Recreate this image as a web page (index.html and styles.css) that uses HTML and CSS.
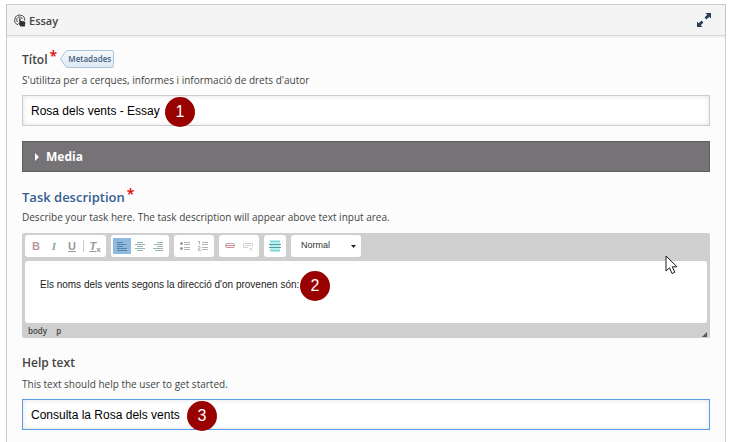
FILE: index.html
```html
<!DOCTYPE html>
<html lang="ca">
<head>
    <meta charset="UTF-8">
    <meta name="viewport" content="width=device-width, initial-scale=1.0">
    <title>Essay</title>
    <link rel="stylesheet" href="styles.css">
</head>
<body>
    <main class="panel">
        <header class="panel-header">
            <svg class="panel-icon" viewBox="0 0 12 13" fill="none" stroke="#444">
                <path d="M4 10.8A5 5 0 1 1 10.7 6.6" stroke-width="1"/>
                <path d="M3.6 8A2.9 2.9 0 1 1 8.3 5" stroke-width="1"/>
                <path d="M5 4.6q.8-.7 1.5 0v2.2l4 .8q1 .3.8 1.4l-.5 3.5H6.6L4.2 9.4q.4-.8 1.2-.2z" fill="#333" stroke="none"/>
            </svg>
            <h1>Essay</h1>
            <button type="button" class="expand" aria-label="Fullscreen">
                <svg viewBox="0 0 14 14" fill="#2c3e50">
                    <path d="M8.5 0H14v5.5l-1.8-1.8-2.7 2.7-1.9-1.9 2.7-2.7z"/>
                    <path d="M5.5 14H0V8.5l1.8 1.8 2.7-2.7 1.9 1.9-2.7 2.7z"/>
                </svg>
            </button>
        </header>

        <form class="panel-body">
            <!-- Title -->
            <div class="field">
                <div class="label-row">
                    <label for="title">Títol<span class="required">*</span></label>
                    <button type="button" class="metadata">
                        <svg viewBox="0 0 54 18">
                            <defs>
                                <linearGradient id="tagFill" x1="0" y1="0" x2="0" y2="1">
                                    <stop offset="0" stop-color="#f8fafc"/>
                                    <stop offset="1" stop-color="#dbe8f2"/>
                                </linearGradient>
                            </defs>
                            <path d="M8 .5H51.5q2 0 2 2v13q0 2-2 2H8Q6 17.5 4.5 15L.5 9l4-6Q6 .5 8 .5z" fill="url(#tagFill)" stroke="#a9c3d9"/>
                        </svg>
                        <span>Metadades</span>
                    </button>
                </div>
                <p class="description">S'utilitza per a cerques, informes i informació de drets d'autor</p>
                <div class="input-wrap">
                    <input type="text" id="title" value="Rosa dels vents - Essay">
                    <span class="step step-1">1</span>
                </div>
            </div>

            <button type="button" class="group-title"><span class="arrow"></span>Media</button>

            <!-- Task description -->
            <div class="field">
                <div class="label-row">
                    <label for="task" class="important">Task description<span class="required">*</span></label>
                </div>
                <p class="description">Describe your task here. The task description will appear above text input area.</p>
                <div class="editor">
                    <div class="toolbar">
                        <div class="tool-group">
                            <button type="button" class="tool bold" aria-label="Bold">B</button>
                            <button type="button" class="tool italic" aria-label="Italic">I</button>
                            <button type="button" class="tool underline" aria-label="Underline">U</button>
                            <span class="separator"></span>
                            <button type="button" class="tool clear" aria-label="Remove format"><u>T</u><sub>x</sub></button>
                        </div>
                        <div class="tool-group">
                            <button type="button" class="tool active" aria-label="Align left">
                                <svg viewBox="0 0 12 12" stroke="#5585a0"><path d="M1 2.5h6M1 4.5h9M1 6.5h6M1 8.5h10M1 10.5h10"/></svg>
                            </button>
                            <button type="button" class="tool" aria-label="Center">
                                <svg viewBox="0 0 12 12" stroke="#9db3b3"><path d="M3 2.5h6M1 4.5h10M3 6.5h6M1 8.5h10M3 10.5h6"/></svg>
                            </button>
                            <button type="button" class="tool" aria-label="Align right">
                                <svg viewBox="0 0 12 12" stroke="#9db3b3"><path d="M5 2.5h6M2 4.5h9M5 6.5h6M1 8.5h10M3 10.5h8"/></svg>
                            </button>
                        </div>
                        <div class="tool-group">
                            <button type="button" class="tool" aria-label="Bulleted list">
                                <svg viewBox="0 0 12 12" stroke="#b4b4b4"><path d="M5 2.5h6M5 4.5h6M5 7.5h6M5 9.5h6"/><g fill="#999" stroke="none"><circle cx="2.5" cy="3.5" r="1.5"/><circle cx="2.5" cy="8.5" r="1.5"/></g></svg>
                            </button>
                            <button type="button" class="tool" aria-label="Numbered list">
                                <svg viewBox="0 0 12 12" stroke="#b4b4b4" fill="none"><path d="M5 2.5h6M5 4.5h6M5 7.5h6M5 9.5h6M1 1.5h1.5v3M1 6.5h2v2H1.5v2H4"/></svg>
                            </button>
                        </div>
                        <div class="tool-group">
                            <button type="button" class="tool" aria-label="Link">
                                <svg viewBox="0 0 12 12" fill="none"><rect x="1.5" y="3.5" width="9" height="4" rx="1.5" stroke="#b9adaf"/><path d="M2 5.5h8M3 7.5h6" stroke="#e3858b"/></svg>
                            </button>
                            <button type="button" class="tool" aria-label="Unlink">
                                <svg viewBox="0 0 12 12" fill="none" stroke="#d2d2d2"><path d="M6 7.5H1.5v-4h9v3M3 5.5h6M7.5 7.5l3 3M10.5 7.5l-3 3"/></svg>
                            </button>
                        </div>
                        <div class="tool-group">
                            <button type="button" class="tool" aria-label="Horizontal line">
                                <svg viewBox="0 0 12 12"><path d="M1 0h10v12H1z" fill="#b5eff0"/><path d="M1 1.5h10M1 10.5h10" stroke="#7fcfd0"/><path d="M0 4.5h12M0 7.5h12" stroke="#5a9c9e"/></svg>
                            </button>
                        </div>
                        <select class="format" aria-label="Paragraph format">
                            <option>Normal</option>
                        </select>
                    </div>
                    <div class="input-wrap">
                        <textarea id="task">Els noms dels vents segons la direcció d'on provenen són:</textarea>
                        <span class="step step-2">2</span>
                    </div>
                    <div class="path-bar">
                        <span>body</span>
                        <span>p</span>
                        <span class="resizer"></span>
                    </div>
                    <svg class="cursor" viewBox="0 0 13 20">
                        <path d="M1 1v15l3.5-3.2L7 18.5l2.8-1.2-2.5-5.5H12z" fill="#fff" stroke="#1c1c28"/>
                    </svg>
                </div>
            </div>

            <!-- Help text -->
            <div class="field">
                <div class="label-row">
                    <label for="help">Help text</label>
                </div>
                <p class="description">This text should help the user to get started.</p>
                <div class="input-wrap">
                    <input type="text" id="help" class="focused" value="Consulta la Rosa dels vents">
                    <span class="step step-3">3</span>
                </div>
            </div>
        </form>
    </main>
</body>
</html>
```

FILE: styles.css
```css
* {
    box-sizing: border-box;
}

body {
    margin: 0;
    padding: 4px 10px 0 6px;
    background-color: #fff;
    color: #444;
    font-family: "Open Sans", sans-serif;
}

button {
    margin: 0;
    padding: 0;
    border: none;
    background: none;
    font-family: inherit;
    color: inherit;
    cursor: pointer;
}

.panel {
    min-height: calc(100vh - 4px);
    border: 1px solid #ccc;
    border-bottom: none;
    background-color: #fcfcfc;
}

.panel-header {
    display: flex;
    align-items: center;
    gap: 3px;
    height: 31px;
    padding: 0 14px 0 7px;
    background-color: #f4f4f4;
    border-bottom: 1px solid #d8d8d8;
    box-shadow: 0 1px 2px rgba(0, 0, 0, 0.08);
}

.panel-icon {
    width: 12px;
    height: 13px;
}

.panel-header h1 {
    margin: 0;
    font-size: 11px;
    font-weight: 600;
}

.expand {
    margin-left: auto;
    width: 14px;
    height: 14px;
}

.expand svg {
    display: block;
}

.panel-body {
    padding: 13px 15px 12px;
}

.field {
    margin-bottom: 15px;
}

.field:last-child {
    margin-bottom: 0;
}

.label-row {
    display: flex;
    align-items: center;
    gap: 3px;
    height: 20px;
    margin-bottom: 3px;
}

label {
    font-size: 12px;
    line-height: 20px;
    font-weight: 600;
}

label.important {
    font-size: 13px;
    color: #355e92;
}

.required {
    margin-left: 2px;
    color: #e00000;
    font-size: 14px;
    line-height: 16px;
    vertical-align: 3px;
}

.metadata {
    position: relative;
    width: 54px;
    height: 18px;
    padding-left: 5px;
    color: #45607f;
    font-size: 8px;
    font-weight: 600;
    line-height: 16px;
}

.metadata svg {
    position: absolute;
    inset: 0;
}

.metadata span {
    position: relative;
}

.description {
    margin: 0 0 7px;
    font-size: 10px;
    line-height: 16px;
}

.input-wrap {
    position: relative;
}

input {
    display: block;
    width: 100%;
    height: 31px;
    padding: 0 8px;
    border: 1px solid #ccc;
    background-color: #fff;
    box-shadow: inset 0 0 5px rgba(0, 0, 0, 0.12);
    font-family: "Liberation Sans", Arial, sans-serif;
    font-size: 12px;
    color: #000;
}

input.focused {
    border-color: #5a9de6;
}

/* numbered markers over the fields */
.step {
    position: absolute;
    top: 2px;
    width: 30px;
    height: 30px;
    border-radius: 50%;
    background-color: #900;
    color: #fff;
    font-family: "Liberation Sans", Arial, sans-serif;
    font-size: 16px;
    line-height: 30px;
    text-align: center;
}

.step-1 {
    left: 143px;
}

.step-2 {
    top: 10px;
    left: 275px;
}

.step-3 {
    left: 165px;
}

.group-title {
    display: flex;
    align-items: center;
    width: 100%;
    height: 31px;
    margin-bottom: 14px;
    padding-left: 12px;
    border: 1px solid #5f5d60;
    background-color: #757376;
    color: #fff;
    font-size: 12px;
    font-weight: 700;
}

.arrow {
    margin-right: 7px;
    border: 4px solid transparent;
    border-left-color: #fff;
    border-right: none;
}

.editor {
    position: relative;
    margin-top: 8px;
    padding: 2px 3px 0;
    border-radius: 2px;
    background-color: #cfcfcf;
}

.toolbar {
    display: flex;
    gap: 5px;
    height: 26px;
}

.tool-group {
    display: flex;
    align-items: center;
    height: 22px;
    padding: 0 2px;
    border-radius: 3px;
    background-color: #fff;
}

.tool {
    display: flex;
    align-items: center;
    justify-content: center;
    width: 18px;
    height: 16px;
    color: #999;
    font-family: "Liberation Sans", Arial, sans-serif;
    font-size: 11px;
    font-weight: 700;
}

.tool svg {
    width: 12px;
    height: 12px;
}

.tool.active {
    background-color: #8fb9e0;
}

.bold {
    color: #b69a9f;
}

.italic {
    color: #8aa5a8;
    font-family: "Liberation Serif", serif;
    font-style: italic;
}

.underline {
    text-decoration: underline;
}

.clear u {
    font-style: italic;
}

.clear sub {
    align-self: flex-end;
    font-size: 8px;
    line-height: 8px;
}

.separator {
    width: 1px;
    height: 12px;
    margin: 0 2px;
    background-color: #ccc;
}

.format {
    width: 70px;
    height: 22px;
    padding: 0 10px 2px;
    border: none;
    border-radius: 3px;
    appearance: none;
    background: #fff url("data:image/svg+xml,%3Csvg xmlns='http://www.w3.org/2000/svg' width='5' height='3'%3E%3Cpath d='M0 0h5L2.5 3z' fill='%23222'/%3E%3C/svg%3E") no-repeat right 5px center;
    color: #333;
    font-family: "Liberation Sans", Arial, sans-serif;
    font-size: 9px;
}

textarea {
    display: block;
    width: 100%;
    height: 62px;
    padding: 16px 15px;
    border: none;
    border-radius: 3px;
    resize: none;
    background-color: #fff;
    color: #222;
    font-family: "Liberation Sans", Arial, sans-serif;
    font-size: 10px;
    line-height: 16px;
}

.path-bar {
    display: flex;
    align-items: center;
    gap: 9px;
    height: 15px;
    padding: 0 3px;
    color: #444;
    font-size: 8px;
    font-weight: 600;
}

.resizer {
    align-self: flex-end;
    margin: 0 -3px 1px auto;
    border-left: 5px solid transparent;
    border-bottom: 5px solid #555;
}

.cursor {
    position: absolute;
    top: 22px;
    right: 32px;
    width: 13px;
    height: 20px;
}
```
